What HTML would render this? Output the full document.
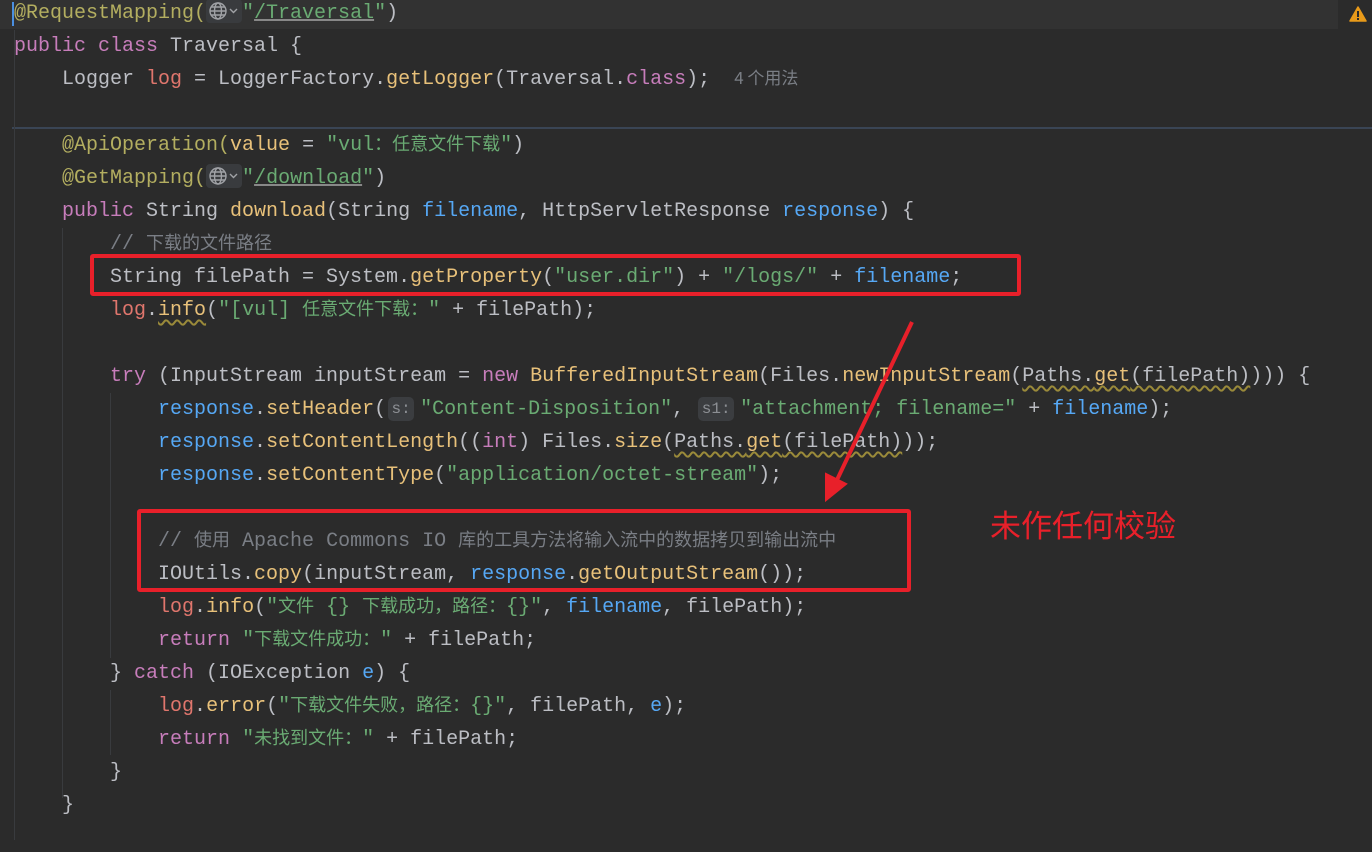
<!DOCTYPE html>
<html><head><meta charset="utf-8"><style>
body{margin:0;width:1372px;height:852px;background:#2b2b2b;overflow:hidden;position:relative;font-family:"Liberation Mono","DejaVu Sans Mono","Noto Sans CJK SC",monospace;font-size:20px;color:#bcbec4}
.l{position:absolute;left:14px;height:33px;line-height:33px;white-space:pre}
.k{color:#c77dbb}.a{color:#b3ae60}.s{color:#6aab73}.m{color:#e8c17a}.f{color:#e0766d}.p{color:#56a8f5}.c{color:#7a7e85}.n{color:#c77dbb}
.z{font-family:"Noto Sans CJK SC",sans-serif;font-size:18px;line-height:20px}
.u{text-decoration:underline;text-decoration-color:#888}
.w{text-decoration:underline wavy #9a8a3a;text-underline-offset:4px}
.h{display:inline-block;background:#3b3d40;color:#8c8f94;border-radius:5px;height:24px;line-height:24px;vertical-align:middle;font-size:16px;text-align:center;margin:0 6px 0 2px}
.g{display:inline-block;background:#393b3e;border-radius:4px;width:36px;height:24px;vertical-align:middle;position:relative;top:-2px}
.g svg{position:absolute;left:2px;top:2px}
.box{position:absolute;border:4px solid #e8202a;border-radius:3px}
.ig{position:absolute;width:1px;background:#393b3e}
</style></head><body>
<div style="position:absolute;left:0;top:0;width:1338px;height:29px;background:#323232"></div>
<div style="position:absolute;left:12px;top:2px;width:2px;height:24px;background:#4a8fe0"></div>
<div style="position:absolute;left:12px;top:127px;width:1360px;height:2px;background:#3a4555"></div>
<svg style="position:absolute;left:1349px;top:6px" width="18" height="16" viewBox="0 0 18 16"><path d="M9 1 L17 15 L1 15 Z" fill="#e89a1a" stroke="#e89a1a" stroke-linejoin="round" stroke-width="1.5"/><rect x="8" y="5" width="2" height="6" fill="#2b2b2b"/><rect x="8" y="12" width="2" height="2" fill="#2b2b2b"/></svg>
<div class="ig" style="left:14px;top:30px;height:810px"></div>
<div class="ig" style="left:62px;top:228px;height:570px"></div>
<div class="ig" style="left:110px;top:393px;height:265px"></div>
<div class="ig" style="left:110px;top:690px;height:65px"></div>

<div class="l" style="top:-3px"><span class="a">@RequestMapping(</span><span class="g"><svg width="32" height="20" viewBox="0 0 32 20"><g fill="none" stroke="#a0a2a6" stroke-width="1.4"><circle cx="10" cy="10" r="8"/><ellipse cx="10" cy="10" rx="3.5" ry="8"/><path d="M2 10H18M3.5 6H16.5M3.5 14H16.5"/><path d="M22 8l3.5 3.5L29 8"/></g></svg></span><span class="s">"<span class="u">/Traversal</span>"</span>)</div>
<div class="l" style="top:30px"><span class="k">public class</span> Traversal {</div>
<div class="l" style="top:63px">    Logger <span class="f">log</span> = LoggerFactory.<span class="m">getLogger</span>(Traversal.<span class="k">class</span>);  <span class="c z" style="font-size:17px">4 个用法</span></div>
<div class="l" style="top:129px">    <span class="a">@ApiOperation(</span><span class="m">value</span> = <span class="s">"vul<span class="z">：任意文件下载</span>"</span>)</div>
<div class="l" style="top:162px">    <span class="a">@GetMapping(</span><span class="g"><svg width="32" height="20" viewBox="0 0 32 20"><g fill="none" stroke="#a0a2a6" stroke-width="1.4"><circle cx="10" cy="10" r="8"/><ellipse cx="10" cy="10" rx="3.5" ry="8"/><path d="M2 10H18M3.5 6H16.5M3.5 14H16.5"/><path d="M22 8l3.5 3.5L29 8"/></g></svg></span><span class="s">"<span class="u">/download</span>"</span>)</div>
<div class="l" style="top:195px">    <span class="k">public</span> String <span class="m">download</span>(String <span class="p">filename</span>, HttpServletResponse <span class="p">response</span>) {</div>
<div class="l" style="top:228px">        <span class="c">// <span class="z">下载的文件路径</span></span></div>
<div class="l" style="top:261px">        String filePath = System.<span class="m">getProperty</span>(<span class="s">"user.dir"</span>) + <span class="s">"/logs/"</span> + <span class="p">filename</span>;</div>
<div class="l" style="top:294px">        <span class="f">log</span>.<span class="m w">info</span>(<span class="s">"[vul] <span class="z">任意文件下载：</span>"</span> + filePath);</div>
<div class="l" style="top:360px">        <span class="k">try</span> (InputStream inputStream = <span class="k">new</span> <span class="m">BufferedInputStream</span>(Files.<span class="m">newInputStream</span>(<span class="w">Paths.<span class="m">get</span>(filePath)</span>))) {</div>
<div class="l" style="top:393px">            <span class="p">response</span>.<span class="m">setHeader</span>(<span class="h" style="width:26px">s:</span><span class="s">"Content-Disposition"</span>, <span class="h" style="width:36px">s1:</span><span class="s">"attachment; filename="</span> + <span class="p">filename</span>);</div>
<div class="l" style="top:426px">            <span class="p">response</span>.<span class="m">setContentLength</span>((<span class="k">int</span>) Files.<span class="m">size</span>(<span class="w">Paths.<span class="m">get</span>(filePath)</span>));</div>
<div class="l" style="top:459px">            <span class="p">response</span>.<span class="m">setContentType</span>(<span class="s">"application/octet-stream"</span>);</div>
<div class="l" style="top:525px">            <span class="c">// <span class="z">使用</span> Apache Commons IO <span class="z">库的工具方法将输入流中的数据拷贝到输出流中</span></span></div>
<div class="l" style="top:558px">            IOUtils.<span class="m">copy</span>(inputStream, <span class="p">response</span>.<span class="m">getOutputStream</span>());</div>
<div class="l" style="top:591px">            <span class="f">log</span>.<span class="m">info</span>(<span class="s">"<span class="z">文件</span> {} <span class="z">下载成功，路径：</span>{}"</span>, <span class="p">filename</span>, filePath);</div>
<div class="l" style="top:624px">            <span class="k">return</span> <span class="s">"<span class="z">下载文件成功：</span>"</span> + filePath;</div>
<div class="l" style="top:657px">        } <span class="k">catch</span> (IOException <span class="p">e</span>) {</div>
<div class="l" style="top:690px">            <span class="f">log</span>.<span class="m">error</span>(<span class="s">"<span class="z">下载文件失败，路径：</span>{}"</span>, filePath, <span class="p">e</span>);</div>
<div class="l" style="top:723px">            <span class="k">return</span> <span class="s">"<span class="z">未找到文件：</span>"</span> + filePath;</div>
<div class="l" style="top:756px">        }</div>
<div class="l" style="top:789px">    }</div>

<div class="box" style="left:90px;top:254px;width:923px;height:34px"></div>
<div class="box" style="left:137px;top:509px;width:766px;height:75px"></div>
<svg style="position:absolute;left:0;top:0" width="1372" height="852"><line x1="912" y1="322" x2="836" y2="482" stroke="#e8202a" stroke-width="4"/><path d="M826 500 L826 474 L846 484 Z" fill="#e8202a" stroke="#e8202a" stroke-width="2"/></svg>
<div style="position:absolute;left:990px;top:501px;font-family:'Noto Sans CJK SC',sans-serif;font-size:31px;color:#e8202a">未作任何校验</div>
</body></html>
